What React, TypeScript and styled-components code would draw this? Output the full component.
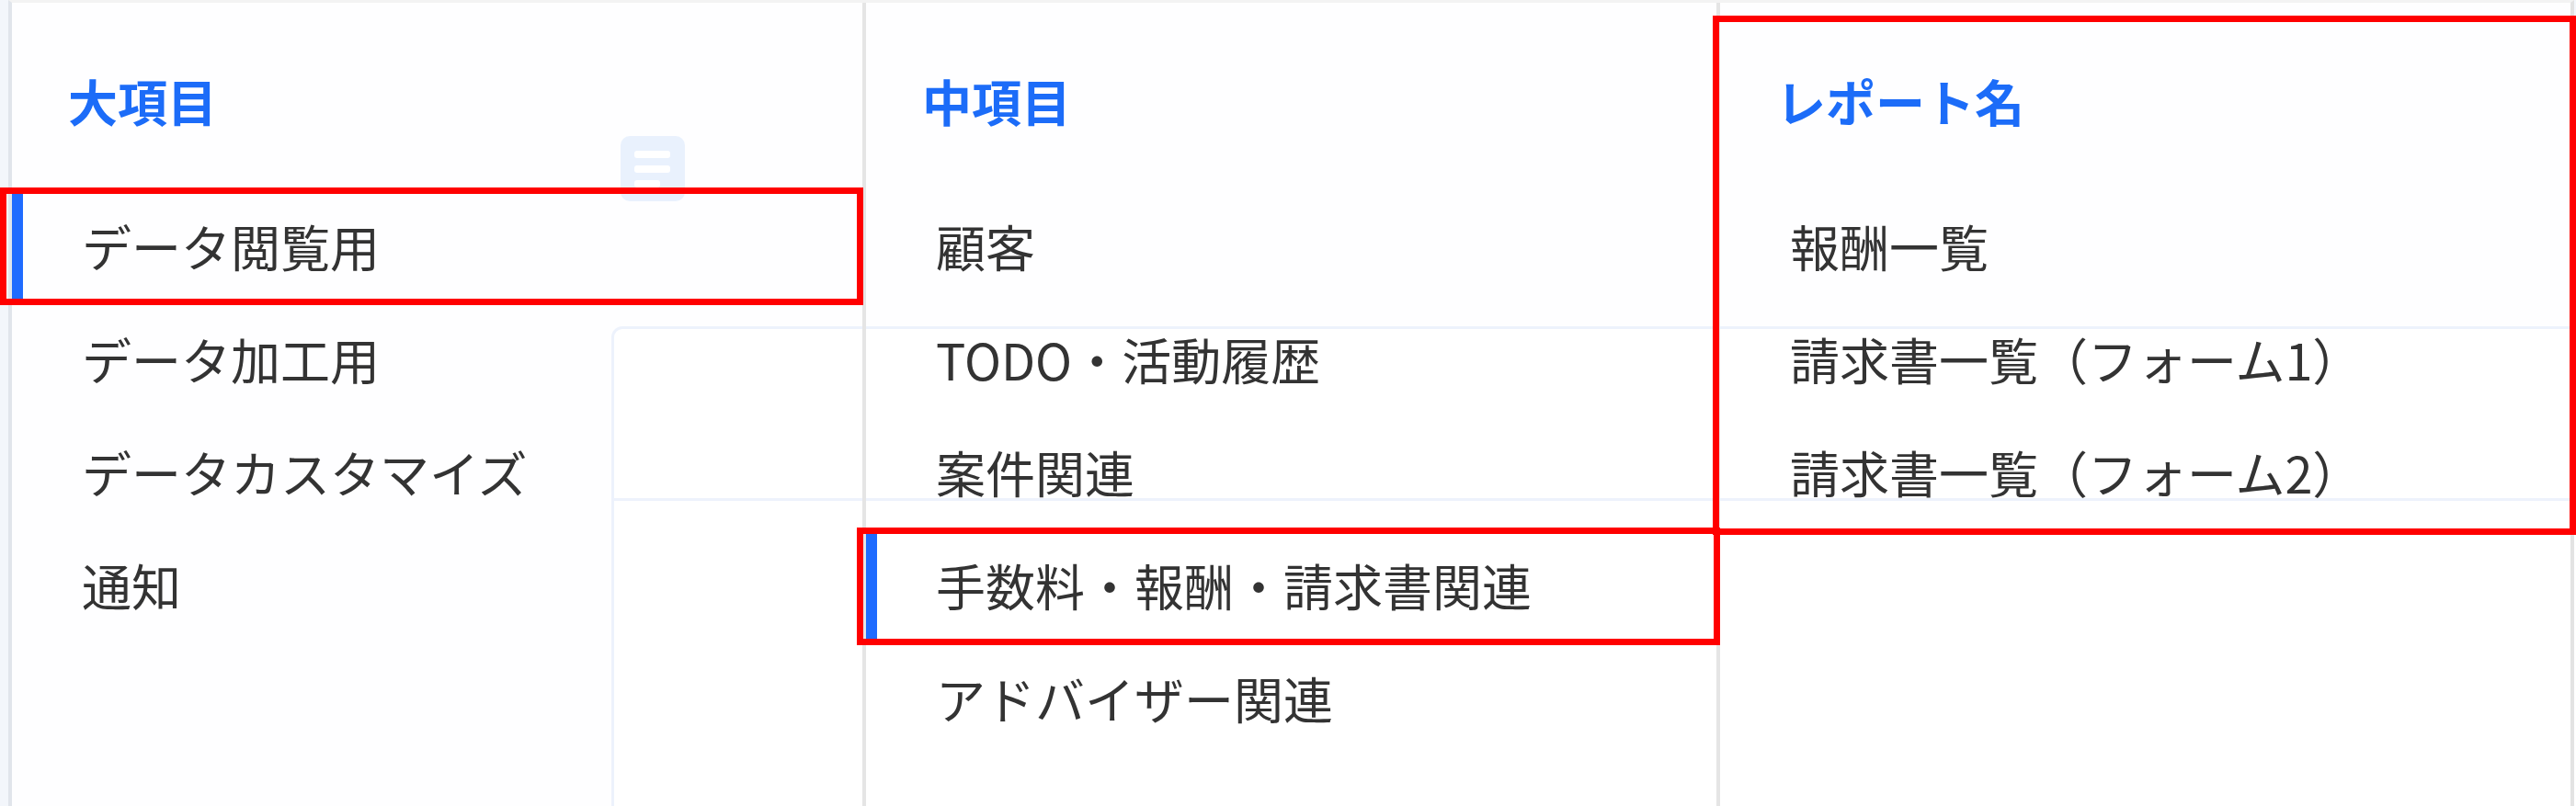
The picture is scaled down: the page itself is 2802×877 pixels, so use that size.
import React from 'react';
import styled, { createGlobalStyle } from 'styled-components';

const GlobalStyle = createGlobalStyle`
  html, body {
    margin: 0;
    padding: 0;
  }
  body {
    background: #f3f6fb;
    font-family: "Noto Sans CJK JP", "Noto Sans", sans-serif;
  }
`;

const Stage = styled.div`
  position: relative;
  width: 2802px;
  height: 877px;
  overflow: hidden;
  background: #f3f6fb;
`;

/* page content lying underneath the dropdown */
const Page = styled.div`
  display: flex;
  flex-direction: column;
  align-items: flex-start;
  padding: 148px 0 0 665px;
  box-sizing: border-box;
  height: 100%;
`;

const ListIcon = styled.div`
  flex-shrink: 0;
  margin-left: 10px;
  width: 70px;
  height: 71px;
  border-radius: 10px;
  background: #6ca2f2;
  display: flex;
  flex-direction: column;
  gap: 8px;
  padding: 16px 0 0 15px;
  box-sizing: border-box;
`;

const IconBar = styled.span<{ $w: number }>`
  display: block;
  width: ${(p) => p.$w}px;
  height: 8px;
  border-radius: 3px;
  background: #ffffff;
`;

const Card = styled.div`
  margin-top: 136px;
  width: 2400px;
  height: 700px;
  flex-shrink: 0;
  border: 3px solid #87a8eb;
  border-radius: 12px;
  background: #ffffff;
`;

const CardRow = styled.div`
  height: 184px;
  border-bottom: 3px solid #87a8eb;
`;

/* dropdown menu */
const Menu = styled.div`
  position: absolute;
  top: 0;
  left: 9px;
  width: 2791px;
  bottom: 0;
  box-sizing: border-box;
  display: grid;
  grid-template-columns: 925px 929px 929px;
  background: rgba(255, 255, 255, 0.85);
  border-left: 4px solid #e1e5eb;
  border-right: 4px solid #e3e3e3;
  border-top: 3px solid #f3f3f3;
`;

const Column = styled.div<{ $divider?: boolean }>`
  box-sizing: border-box;
  padding-top: 59px;
  border-left: ${(p) => (p.$divider ? '4px solid #e5e5e5' : 'none')};
  display: flex;
  flex-direction: column;
`;

const Heading = styled.div`
  padding-left: 61px;
  height: 96px;
  line-height: 96px;
  margin-bottom: 48px;
  font-size: 54px;
  font-weight: 700;
  color: #1c6cf8;
  white-space: nowrap;
`;

const Item = styled.div<{ $active?: boolean }>`
  height: 123px;
  line-height: 123px;
  padding-left: 76px;
  font-size: 54px;
  font-weight: 400;
  color: #333333;
  white-space: nowrap;
  box-shadow: ${(p) => (p.$active ? 'inset 12px 0 0 #1f6bff' : 'none')};
`;

/* red annotation frames drawn over the screenshot */
const Annotation = styled.div<{ $x: number; $y: number; $w: number; $h: number }>`
  position: absolute;
  left: ${(p) => p.$x}px;
  top: ${(p) => p.$y}px;
  width: ${(p) => p.$w}px;
  height: ${(p) => p.$h}px;
  box-sizing: border-box;
  border: 7px solid #ff0000;
  pointer-events: none;
`;

type Col = { title: string; items: string[]; active?: number };

const columns: Col[] = [
  { title: '大項目', items: ['データ閲覧用', 'データ加工用', 'データカスタマイズ', '通知'], active: 0 },
  {
    title: '中項目',
    items: ['顧客', 'TODO・活動履歴', '案件関連', '手数料・報酬・請求書関連', 'アドバイザー関連'],
    active: 3,
  },
  { title: 'レポート名', items: ['報酬一覧', '請求書一覧（フォーム1）', '請求書一覧（フォーム2）'] },
];

export default function App() {
  return (
    <>
      <GlobalStyle />
      <Stage>
        <Page>
          <ListIcon>
            <IconBar $w={39} />
            <IconBar $w={39} />
            <IconBar $w={28} />
          </ListIcon>
          <Card>
            <CardRow />
          </Card>
        </Page>
        <Menu>
          {columns.map((c, ci) => (
            <Column key={c.title} $divider={ci > 0}>
              <Heading>{c.title}</Heading>
              {c.items.map((it, i) => (
                <Item key={it} $active={c.active === i}>
                  {it}
                </Item>
              ))}
            </Column>
          ))}
        </Menu>
        <Annotation $x={0} $y={204} $w={939} $h={128} />
        <Annotation $x={932} $y={574} $w={939} $h={128} />
        <Annotation $x={1863} $y={17} $w={939} $h={565} />
      </Stage>
    </>
  );
}
